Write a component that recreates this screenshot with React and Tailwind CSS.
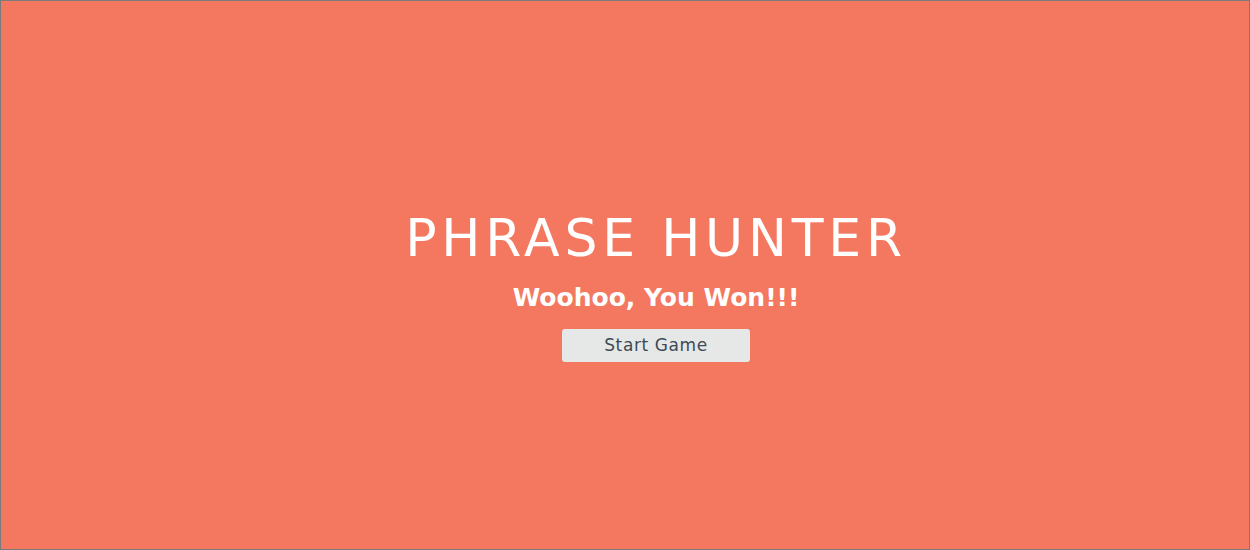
export default function App() {
  return (
    <div className="h-screen w-full border border-[#7a7a7a] bg-[#f47860] flex flex-col items-center justify-center font-['DejaVu_Sans',sans-serif] pt-[24px] pl-[62px]">
      <h1 className="text-white text-[52px] leading-none tracking-[4.8px] font-normal">PHRASE HUNTER</h1>
      <h2 className="mt-[21px] text-white text-[25px] leading-none font-semibold">Woohoo, You Won!!!</h2>
      <button className="mt-[19px] w-[188px] h-[33px] rounded-[3px] bg-[#e6e8e7] text-[#3d4a55] text-[17px] tracking-[0.6px]">
        Start Game
      </button>
    </div>
  );
}
